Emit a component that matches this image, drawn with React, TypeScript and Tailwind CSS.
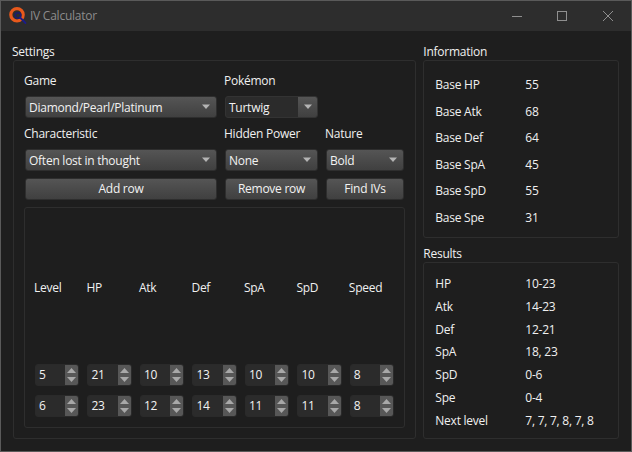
const infoRows = [
  ["Base HP", "55"],
  ["Base Atk", "68"],
  ["Base Def", "64"],
  ["Base SpA", "45"],
  ["Base SpD", "55"],
  ["Base Spe", "31"],
];

const resultRows = [
  ["HP", "10-23"],
  ["Atk", "14-23"],
  ["Def", "12-21"],
  ["SpA", "18, 23"],
  ["SpD", "0-6"],
  ["Spe", "0-4"],
  ["Next level", "7, 7, 7, 8, 7, 8"],
];

const columns = ["Level", "HP", "Atk", "Def", "SpA", "SpD", "Speed"];

const statRows = [
  ["5", "21", "10", "13", "10", "10", "8"],
  ["6", "23", "12", "14", "11", "11", "8"],
];

function Logo() {
  return (
    <svg width="18" height="18" viewBox="0 0 18 18" className="shrink-0">
      <circle cx="8" cy="7.8" r="6.2" fill="none" stroke="#e8591c" strokeWidth="3.2" />
      <circle cx="9" cy="8.5" r="2.8" fill="none" stroke="#1c1c6e" strokeWidth="1.6" />
      <path d="M11 10.5 L16.5 16" stroke="#1c1c8a" strokeWidth="1.8" strokeLinecap="round" />
    </svg>
  );
}

function WindowButtons() {
  return (
    <div className="ml-auto flex items-center pr-[18px]">
      <svg width="10" height="10" viewBox="0 0 10 10" className="mr-[35px]">
        <path d="M0 5.5 H10" stroke="#8f8f8f" strokeWidth="1" />
      </svg>
      <svg width="10" height="10" viewBox="0 0 10 10" className="mr-[36px]">
        <rect x="0.5" y="0.5" width="9" height="9" fill="none" stroke="#8f8f8f" strokeWidth="1" />
      </svg>
      <svg width="10" height="10" viewBox="0 0 10 10">
        <path d="M0 0 L10 10 M10 0 L0 10" stroke="#8f8f8f" strokeWidth="1" />
      </svg>
    </div>
  );
}

function Caret() {
  return (
    <svg width="10" height="6" viewBox="0 0 10 6" className="shrink-0">
      <path d="M1 0.5 H9 L5 5 Z" fill="#b4b4b4" />
    </svg>
  );
}

function Combo({ value }: { value: string }) {
  return (
    <div className="flex h-[22px] items-center justify-between rounded-[3px] border border-[#2e2e2e] bg-gradient-to-b from-[#555555] to-[#404040] pl-[3px] pr-[5px] text-[#f2f2f2]">
      <span className="pt-px">{value}</span>
      <Caret />
    </div>
  );
}

function EditCombo({ value }: { value: string }) {
  return (
    <div className="flex h-[22px] overflow-hidden rounded-[3px] border border-[#333333] bg-[#2b2b2b] text-[#f2f2f2]">
      <span className="flex flex-1 items-center pl-[3px] pt-px">{value}</span>
      <span className="flex w-[19px] items-center justify-center bg-gradient-to-b from-[#555555] to-[#404040]">
        <Caret />
      </span>
    </div>
  );
}

function Btn({ label }: { label: string }) {
  return (
    <div className="flex h-[22px] items-center justify-center rounded-[3px] border border-[#2e2e2e] bg-gradient-to-b from-[#555555] to-[#404040] text-[#f2f2f2]">
      {label}
    </div>
  );
}

function Spin({ value }: { value: string }) {
  return (
    <div className="flex h-[22px] overflow-hidden rounded-[3px] border border-[#2a2a2a] bg-[#2b2b2b] text-[#f2f2f2]">
      <span className="flex flex-1 items-center pl-[3px]">{value}</span>
      <span className="flex w-[13px] flex-col items-center justify-center gap-[4px] bg-[#575757]">
        <svg width="9" height="5" viewBox="0 0 9 5">
          <path d="M4.5 0 L9 5 H0 Z" fill="#a8a8a8" />
        </svg>
        <svg width="9" height="5" viewBox="0 0 9 5">
          <path d="M0 0 H9 L4.5 5 Z" fill="#a8a8a8" />
        </svg>
      </span>
    </div>
  );
}

function Rows({ rows, className }: { rows: string[][]; className: string }) {
  return (
    <div className={`grid flex-1 auto-rows-fr rounded-[3px] border border-[#2e2e2e] pl-[11px] ${className}`}>
      {rows.map(([name, value]) => (
        <div key={name} className="flex items-center">
          <span className="w-[90px]">{name}</span>
          <span>{value}</span>
        </div>
      ))}
    </div>
  );
}

export default function App() {
  return (
    <div
      className="flex h-[452px] w-[632px] flex-col overflow-hidden border border-[#5a5a5a] bg-[#1e1e1e] text-[12px] leading-[16px] tracking-[-0.25px] text-[#f0f0f0]"
      style={{ fontFamily: '"Open Sans", "Noto Sans", sans-serif' }}
    >
      {/* Title bar */}
      <div className="flex h-[30px] shrink-0 items-center bg-[#2d2d2d] pl-[8px] text-[#8c8c8c]">
        <Logo />
        <span className="ml-[3px]">IV Calculator</span>
        <WindowButtons />
      </div>

      {/* Body */}
      <div className="flex flex-1 gap-[7px] pl-[12px] pr-[12px] pb-[12px]">
        <div className="flex w-[404px] flex-col">
          <div className="-ml-px mt-[13px] h-[16px]">Settings</div>
          <div className="flex flex-1 flex-col rounded-[3px] border border-[#2e2e2e] px-[11px] pb-[10px] pt-[12px]">
            <div className="grid grid-cols-[192px_93px_78px] gap-x-[8px]">
              <div className="-ml-px h-[17px]">Game</div>
              <div className="-ml-px h-[17px]">Pokémon</div>
              <div />
              <div className="mt-[6px]">
                <Combo value="Diamond/Pearl/Platinum" />
              </div>
              <div className="mt-[6px]">
                <EditCombo value="Turtwig" />
              </div>
              <div />
              <div className="-ml-px mt-[8px] h-[16px]">Characteristic</div>
              <div className="-ml-px mt-[8px] h-[16px]">Hidden Power</div>
              <div className="-ml-px mt-[8px] h-[16px]">Nature</div>
              <div className="mt-[7px]">
                <Combo value="Often lost in thought" />
              </div>
              <div className="mt-[7px]">
                <Combo value="None" />
              </div>
              <div className="mt-[7px]">
                <Combo value="Bold" />
              </div>
              <div className="mt-[7px]">
                <Btn label="Add row" />
              </div>
              <div className="mt-[7px]">
                <Btn label="Remove row" />
              </div>
              <div className="mt-[7px]">
                <Btn label="Find IVs" />
              </div>
            </div>

            <div className="-mx-px mt-[7px] flex flex-1 flex-col gap-[9px] rounded-[3px] border border-[#2e2e2e] px-[10px] pb-[10px] pt-[12px]">
              <div className="grid flex-1 grid-cols-7 items-center gap-x-[8px]">
                {columns.map((c) => (
                  <span key={c} className="-ml-px">
                    {c}
                  </span>
                ))}
              </div>
              {statRows.map((row, i) => (
                <div key={i} className="grid grid-cols-7 gap-x-[8px]">
                  {row.map((v, j) => (
                    <Spin key={j} value={v} />
                  ))}
                </div>
              ))}
            </div>
          </div>
        </div>

        <div className="flex w-[196px] flex-col">
          <div className="mt-[13px] h-[16px]">Information</div>
          <div className="flex h-[178px] flex-col">
            <Rows rows={infoRows} className="pb-[6px] pt-[11px]" />
          </div>
          <div className="mt-[8px] h-[16px]">Results</div>
          <Rows rows={resultRows} className="pb-[6px] pt-[10px]" />
        </div>
      </div>
    </div>
  );
}
